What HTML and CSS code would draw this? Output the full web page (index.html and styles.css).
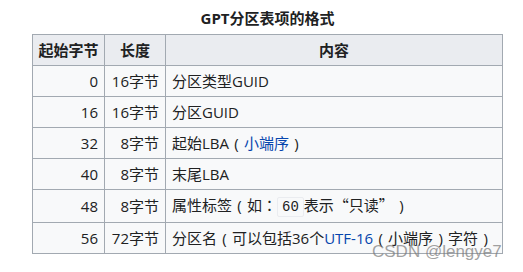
FILE: index.html
```html
<!DOCTYPE html>
<html lang="zh">
<head>
<meta charset="utf-8">
<link rel="stylesheet" href="styles.css">
</head>
<body>
<div class="page">
  <table class="wikitable">
    <caption>GPT分区表项的格式</caption>
    <thead>
      <tr>
        <th class="c1">起始字节</th>
        <th class="c2">长度</th>
        <th class="c3">内容</th>
      </tr>
    </thead>
    <tbody>
      <tr><td class="num">0</td><td class="num">16字节</td><td>分区类型GUID</td></tr>
      <tr><td class="num">16</td><td class="num">16字节</td><td>分区GUID</td></tr>
      <tr><td class="num">32</td><td class="num">8字节</td><td>起始LBA<span class="p">(</span><a class="link" href="#">小端序</a><span class="p">)</span></td></tr>
      <tr><td class="num">40</td><td class="num">8字节</td><td>末尾LBA</td></tr>
      <tr><td class="num">48</td><td class="num">8字节</td><td>属性标签<span class="p">(</span>如<span class="colon">：</span><code class="code">60</code>表示<span class="q">“只读”</span><span class="p">)</span></td></tr>
      <tr><td class="num">56</td><td class="num">72字节</td><td>分区名<span class="p">(</span>可以包括36个<a class="link" href="#">UTF-16</a><span class="p">(</span>小端序<span class="p">)</span>字符<span class="p">)</span></td></tr>
    </tbody>
  </table>
  <div class="watermark">CSDN @lengye7</div>
</div>
</body>
</html>
```
FILE: styles.css
```css
html, body {
  margin: 0;
  padding: 0;
  background: #ffffff;
}
.page {
  position: relative;
  width: 523px;
  height: 272px;
  padding: 7px 0 0 32px;
  box-sizing: border-box;
  font-family: "Open Sans", "Noto Sans CJK SC", sans-serif;
  font-size: 15px;
  color: #202122;
}
.wikitable {
  border-collapse: collapse;
  width: 471px;
  background: #f8f9fa;
  border: 1px solid #a2a9b1;
}
.wikitable caption {
  font-weight: bold;
  text-align: center;
  font-size: 15px;
  line-height: 20px;
  padding: 1px 0 6px;
  background: #ffffff;
}
.wikitable th,
.wikitable td {
  border: 1px solid #a2a9b1;
  padding: 5px 6px;
  line-height: 20px;
  height: 20px;
  white-space: nowrap;
}
.wikitable th {
  background: #eaecf0;
  font-weight: bold;
  text-align: center;
  padding: 5px 4px;
}
.c1 { width: 63px; }
.c2 { width: 52px; }
.wikitable td.num {
  text-align: right;
}
.p {
  display: inline-block;
  width: 15px;
  text-align: center;
}
.colon {
  display: inline-block;
  width: 15px;
  text-align: center;
  font-family: "Noto Sans CJK TC", sans-serif;
}
.q {
  font-family: "Noto Sans CJK SC", sans-serif;
}
.link {
  color: #0645ad;
  text-decoration: none;
}
.code {
  font-family: "Liberation Mono", "DejaVu Sans Mono", monospace;
  font-size: 14px;
  background: #f8f9fa;
  border: 1px solid #eaecf0;
  border-radius: 2px;
  padding: 1px 4px;
  color: #202122;
}
.watermark {
  position: absolute;
  left: 372px;
  top: 242px;
  font-family: "Liberation Sans", Arial, sans-serif;
  font-size: 17px;
  color: rgba(120, 120, 120, 0.7);
}
```
